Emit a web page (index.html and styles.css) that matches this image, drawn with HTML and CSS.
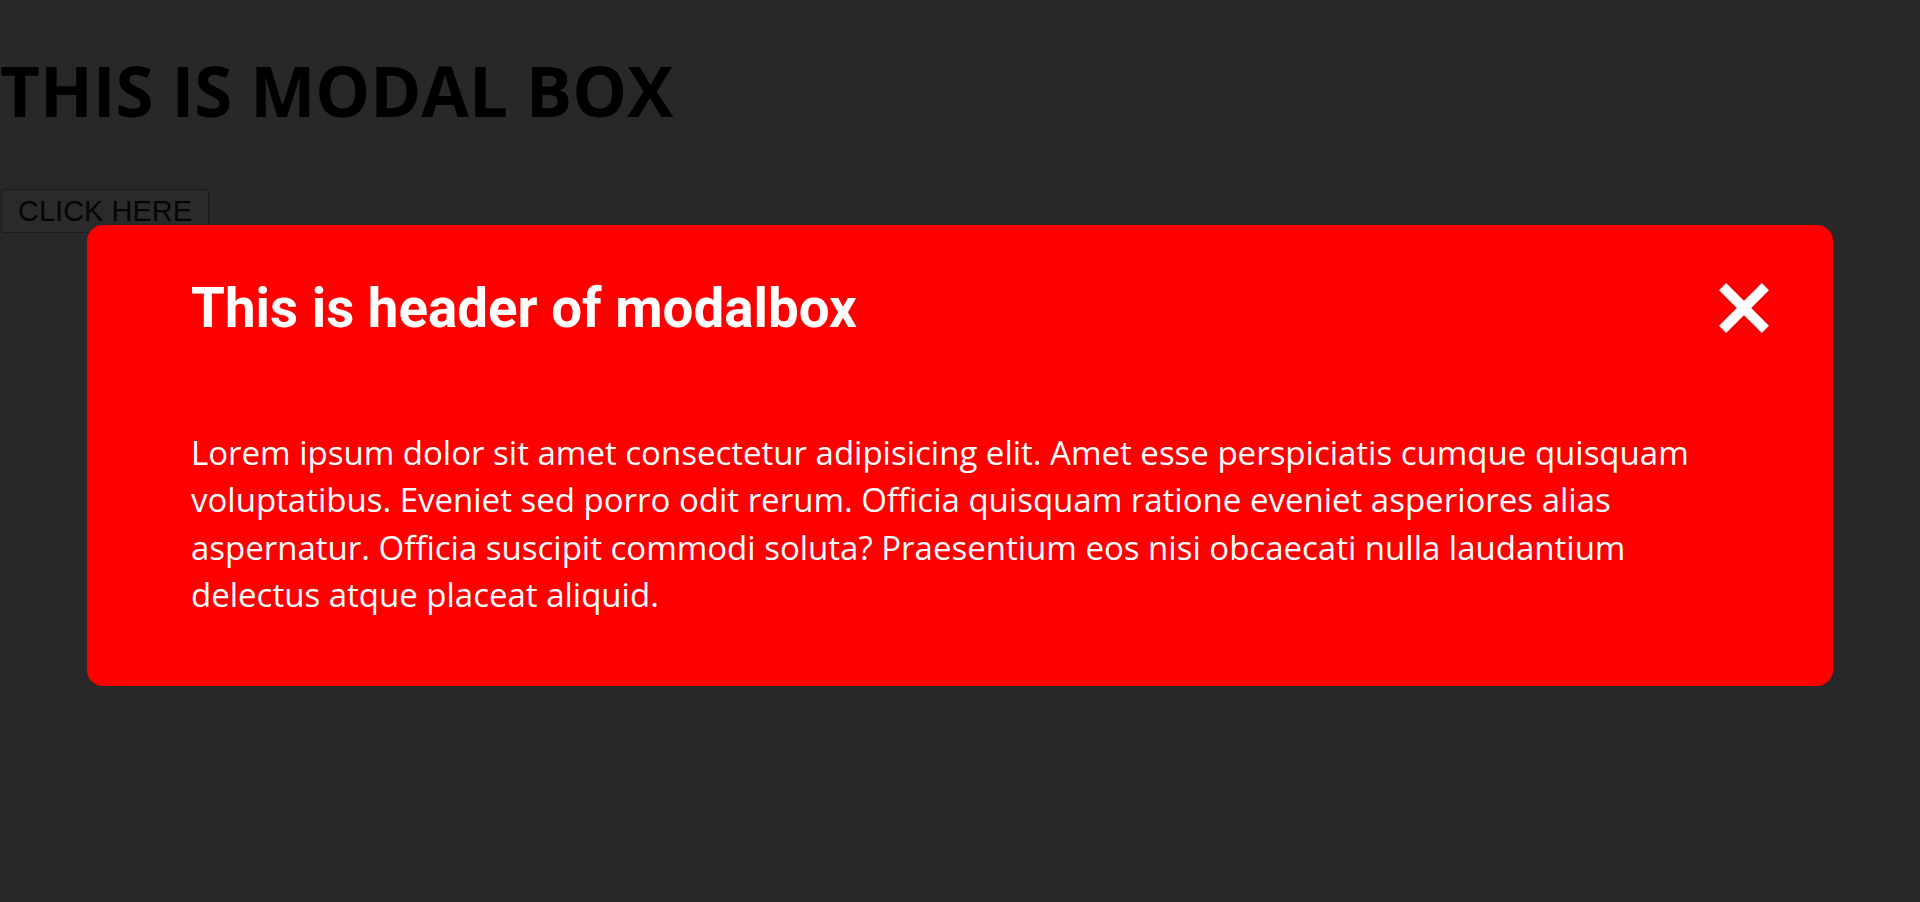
FILE: index.html
```html
<!DOCTYPE html>
<html lang="en">
<head>
<meta charset="utf-8">
<title>Modal Box</title>
<link rel="stylesheet" href="styles.css">
</head>
<body>
  <h1 class="page-title">THIS IS MODAL BOX</h1>
  <div class="actions">
    <button class="open-btn" type="button">CLICK HERE</button>
  </div>

  <div class="modal">
    <div class="modal-header">
      <h2 class="modal-title">This is header of modalbox</h2>
      <button class="close-btn" type="button" aria-label="Close">
        <svg width="50" height="50" viewBox="0 0 50 50" aria-hidden="true">
          <line x1="3.6" y1="3.6" x2="46.4" y2="46.4" stroke="#fff" stroke-width="10" stroke-linecap="butt"/>
          <line x1="46.4" y1="3.6" x2="3.6" y2="46.4" stroke="#fff" stroke-width="10" stroke-linecap="butt"/>
        </svg>
      </button>
    </div>
    <p class="modal-body">Lorem ipsum dolor sit amet consectetur adipisicing elit. Amet esse perspiciatis cumque quisquam voluptatibus. Eveniet sed porro odit rerum. Officia quisquam ratione eveniet asperiores alias aspernatur. Officia suscipit commodi soluta? Praesentium eos nisi obcaecati nulla laudantium delectus atque placeat aliquid.</p>
  </div>
</body>
</html>
```
FILE: styles.css
```css
html, body {
  margin: 0;
  padding: 0;
}

body {
  background: #282828;
  min-height: 902px;
  font-family: "Open Sans", "Noto Sans", sans-serif;
}

.page-title {
  margin: 43px 0 0;
  font-family: "Open Sans", sans-serif;
  font-weight: 700;
  font-size: 69px;
  line-height: 94px;
  color: #000;
}

.actions {
  margin-top: 52px;
  padding-left: 1px;
}

.open-btn {
  font-family: "Liberation Sans", Arial, sans-serif;
  font-size: 29px;
  line-height: 34px;
  height: 44px;
  padding: 4px 16px;
  border: 1px solid #1b1b1b;
  border-radius: 3px;
  background: #2a2a2a;
  color: #050505;
}

.modal {
  position: absolute;
  top: 225px;
  left: 87px;
  width: 1746px;
  box-sizing: border-box;
  padding: 51px 64px 67px 104px;
  background: #ff0000;
  border-radius: 16px;
  color: #fff;
}

.modal-header {
  display: flex;
  align-items: center;
  justify-content: space-between;
}

.modal-title {
  margin: 0;
  font-family: Roboto, sans-serif;
  font-weight: 700;
  font-size: 54.7px;
  line-height: 64px;
  color: #fff;
}

.close-btn {
  display: flex;
  width: 50px;
  height: 50px;
  padding: 0;
  border: 0;
  background: transparent;
  cursor: pointer;
}

.modal-body {
  margin: 89px 0 0;
  padding-right: 42px;
  font-family: "Open Sans", sans-serif;
  font-size: 33px;
  line-height: 47.4px;
  color: #fff;
}
```
